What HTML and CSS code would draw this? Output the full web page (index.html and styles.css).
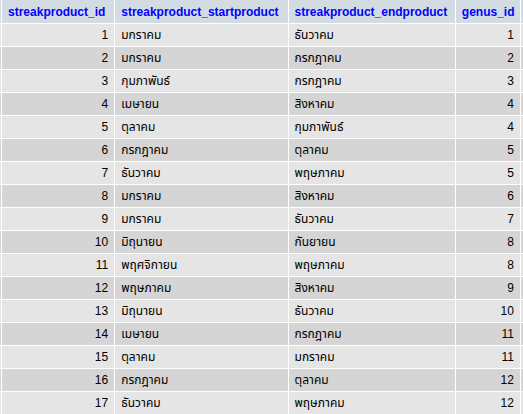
FILE: index.html
```html
<!DOCTYPE html>
<html>
<head>
<meta charset="utf-8">
<link rel="stylesheet" href="styles.css">
</head>
<body>
<table class="data">
  <colgroup>
    <col class="c-lead"><col class="c-id"><col class="c-start"><col class="c-end"><col class="c-genus"><col class="c-tail">
  </colgroup>
  <thead>
    <tr>
      <th></th>
      <th>streakproduct_id</th>
      <th>streakproduct_startproduct</th>
      <th>streakproduct_endproduct</th>
      <th>genus_id</th>
      <th></th>
    </tr>
  </thead>
  <tbody>
    <tr class="odd"><td></td><td class="num">1</td><td>มกราคม</td><td>ธันวาคม</td><td class="num">1</td><td></td></tr>
    <tr class="even"><td></td><td class="num">2</td><td>มกราคม</td><td>กรกฎาคม</td><td class="num">2</td><td></td></tr>
    <tr class="odd"><td></td><td class="num">3</td><td>กุมภาพันธ์</td><td>กรกฎาคม</td><td class="num">3</td><td></td></tr>
    <tr class="even"><td></td><td class="num">4</td><td>เมษายน</td><td>สิงหาคม</td><td class="num">4</td><td></td></tr>
    <tr class="odd"><td></td><td class="num">5</td><td>ตุลาคม</td><td>กุมภาพันธ์</td><td class="num">4</td><td></td></tr>
    <tr class="even"><td></td><td class="num">6</td><td>กรกฎาคม</td><td>ตุลาคม</td><td class="num">5</td><td></td></tr>
    <tr class="odd"><td></td><td class="num">7</td><td>ธันวาคม</td><td>พฤษภาคม</td><td class="num">5</td><td></td></tr>
    <tr class="even"><td></td><td class="num">8</td><td>มกราคม</td><td>สิงหาคม</td><td class="num">6</td><td></td></tr>
    <tr class="odd"><td></td><td class="num">9</td><td>มกราคม</td><td>ธันวาคม</td><td class="num">7</td><td></td></tr>
    <tr class="even"><td></td><td class="num">10</td><td>มิถุนายน</td><td>กันยายน</td><td class="num">8</td><td></td></tr>
    <tr class="odd"><td></td><td class="num">11</td><td>พฤศจิกายน</td><td>พฤษภาคม</td><td class="num">8</td><td></td></tr>
    <tr class="even"><td></td><td class="num">12</td><td>พฤษภาคม</td><td>สิงหาคม</td><td class="num">9</td><td></td></tr>
    <tr class="odd"><td></td><td class="num">13</td><td>มิถุนายน</td><td>ธันวาคม</td><td class="num">10</td><td></td></tr>
    <tr class="even"><td></td><td class="num">14</td><td>เมษายน</td><td>กรกฎาคม</td><td class="num">11</td><td></td></tr>
    <tr class="odd"><td></td><td class="num">15</td><td>ตุลาคม</td><td>มกราคม</td><td class="num">11</td><td></td></tr>
    <tr class="even"><td></td><td class="num">16</td><td>กรกฎาคม</td><td>ตุลาคม</td><td class="num">12</td><td></td></tr>
    <tr class="odd"><td></td><td class="num">17</td><td>ธันวาคม</td><td>พฤษภาคม</td><td class="num">12</td><td></td></tr>
  </tbody>
</table>
</body>
</html>
```
FILE: styles.css
```css
html, body {
  margin: 0;
  padding: 0;
  background: #ffffff;
  overflow: hidden;
}

.data {
  font-family: "Liberation Sans", "Noto Sans Thai", "Noto Sans", Arial, sans-serif;
  font-size: 12px;
  color: #000000;
  border-collapse: separate;
  border-spacing: 1px;
  table-layout: fixed;
  width: 552px;
  margin: -1px 0 0 -10px;
}

.c-lead { width: 10px; }
.c-id { width: 112px; }
.c-start { width: 172px; }
.c-end { width: 166px; }
.c-genus { width: 64px; }
.c-tail { width: 20px; }

.data th,
.data td {
  padding: 0 6px;
  white-space: nowrap;
  overflow: hidden;
}

.data th {
  box-sizing: border-box;
  height: 23px;
  background: #d3dce3;
  color: #0000ff;
  font-weight: bold;
  text-align: left;
}

.data td {
  height: 22px;
  text-align: left;
}

.data td.num {
  text-align: right;
}

.data tr.odd td { background: #e5e5e5; }
.data tr.even td { background: #d5d5d5; }
```
